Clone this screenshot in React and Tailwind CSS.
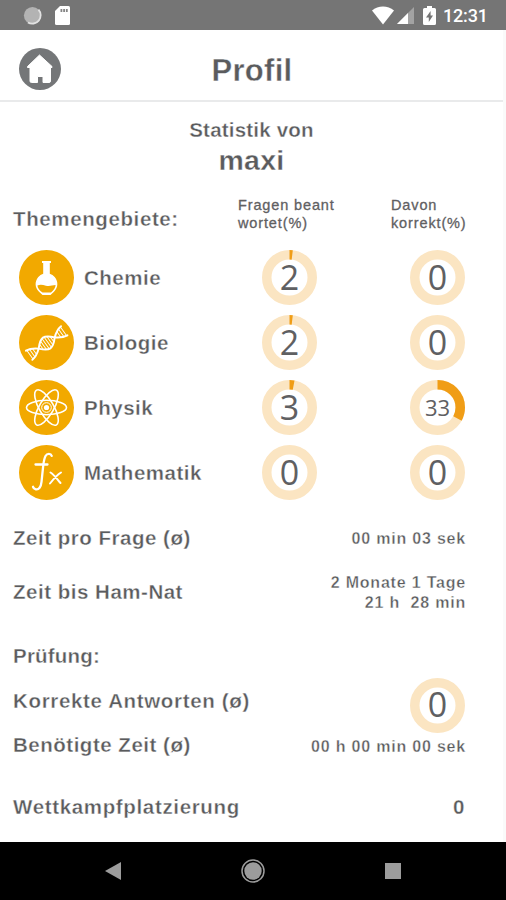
import React from 'react';

const StatusBar = () => (
  <div className="flex h-[30px] items-center justify-between bg-[#757575] pl-[23px] pr-[19px] [-webkit-text-stroke:0]">
    <div className="flex items-center gap-[13px]">
      <svg width="19" height="19" viewBox="0 0 19 19">
        <circle cx="9.5" cy="9.5" r="8.6" fill="#b3b3b3" />
        <path d="M15.5 3.6a8.4 8.4 0 0 1-10.6 12.8" fill="none" stroke="#e2e2e2" strokeWidth="1.8" />
      </svg>
      <svg width="15" height="19" viewBox="0 0 15 19">
        <path d="M5 0h8.5A1.5 1.5 0 0 1 15 1.5v16a1.5 1.5 0 0 1-1.5 1.5h-12A1.5 1.5 0 0 1 0 17.5V5z" fill="#fff" />
        <path d="M5.5 3h1.8v3H5.5zM8.2 3H10v3H8.2zM10.9 3h1.8v3h-1.8z" fill="#858585" />
      </svg>
    </div>
    <div className="flex items-center">
      <svg width="22" height="19" viewBox="0 0 22 19">
        <path d="M0 4.5C6.2-.9 15.8-.9 22 4.5L11 18.5z" fill="#fff" />
      </svg>
      <svg className="ml-[3px]" width="17" height="17" viewBox="0 0 17 17">
        <path d="M17 0v17H0z" fill="#a3a3a3" />
        <path d="M11 6v11H0z" fill="#fff" />
      </svg>
      <svg className="ml-[9px]" width="13" height="19" viewBox="0 0 13 19">
        <path d="M4 0h5v2h2.5A1.5 1.5 0 0 1 13 3.5v14a1.5 1.5 0 0 1-1.5 1.5h-10A1.5 1.5 0 0 1 0 17.5v-14A1.5 1.5 0 0 1 1.5 2H4z" fill="#fff" />
        <path d="M7.6 5L3 11.4h2.8V16L10 9.6H7.6z" fill="#757575" />
      </svg>
      <span className="ml-[7px] mt-[2px] w-[44px] whitespace-nowrap font-[Roboto] text-[18px] font-medium leading-none tracking-[-0.01em] text-white">
        12:31
      </span>
    </div>
  </div>
);

const Header = () => (
  <header className="grid h-[72px] grid-cols-[60px_1fr_60px] items-center border-b-2 border-[#e9eaeb] pl-[19px] pr-[18px] pt-[8px]">
    <svg width="42" height="42" viewBox="0 0 42 42">
      <circle cx="21" cy="21" r="21" fill="#747678" />
      <path
        d="M20.5 7L33 18.5v1h-1.5V33a1.5 1.5 0 0 1-1.5 1.5h-6v-6h-5.5v6h-6A1.5 1.5 0 0 1 11 33V19.5H8.500v-1z"
        fill="#fff"
        stroke="#fff"
        strokeLinejoin="round"
      />
    </svg>
    <h1 className="pt-[2px] text-center text-[31px] leading-none tracking-[0.01em]">Profil</h1>
  </header>
);

const FlaskIcon = () => (
  <svg width="55" height="55" viewBox="0 0 55 55">
    <circle cx="27.5" cy="27.5" r="27.5" fill="#f2a900" />
    <path
      d="M23 11h9v2h-1.2v10.8a12 12 0 0 1 4.9 3.3c3.8 4.6 3.5 10.7-.7 14.6L31.5 45h-8l-3.5-3.3c-4.2-3.9-4.5-10-.7-14.6a12 12 0 0 1 4.9-3.3V13H23z"
      fill="#fff"
    />
    <path d="M18.4 35.6c3-1.5 5.5-.6 8.5.1 3.3.7 6.2-.1 9.7-.6-.1 2.9-1.900 5.200-4.600 7.400h-8.500c-3-1.800-4.800-4-5.100-6.900z" fill="#f2a900" />
  </svg>
);

const DnaIcon = () => (
  <svg width="55" height="55" viewBox="0 0 55 55">
    <circle cx="27.5" cy="27.5" r="27.5" fill="#f2a900" />
    <g transform="translate(27.700 28) rotate(-35) scale(0.930)" fill="none" stroke="#fff" strokeLinecap="round">
      <path
        d="M-23-6C-17-5.500-14-3-10.500 0C-6 5-3 7 0 7S6 5 10.500 0C14-3 17-5.500 23-6M-23 6C-17 5.500-14 3-10.500 0C-6-5-3-7 0-7S6-5 10.500 0C14 3 17 5.500 23 6"
        strokeWidth="2.100"
      />
      <path
        d="M-22-5v10M-19-4.500v9M-16-3v6M-7-3v6M-4.200-5v10M-1.400-6v12M1.400-6v12M4.200-5v10M7-3v6M16-3v6M19-4.500v9M22-5v10"
        strokeWidth="1"
      />
    </g>
  </svg>
);

const AtomIcon = () => (
  <svg width="55" height="55" viewBox="0 0 55 55">
    <circle cx="27.5" cy="27.5" r="27.5" fill="#f2a900" />
    <g fill="none" stroke="#fff" strokeWidth="1.6">
      <ellipse cx="27.5" cy="27.5" rx="20" ry="7.200" />
      <ellipse cx="27.5" cy="27.5" rx="20" ry="7.200" transform="rotate(60 27.5 27.5)" />
      <ellipse cx="27.5" cy="27.5" rx="20" ry="7.200" transform="rotate(120 27.5 27.5)" />
      <circle cx="27.5" cy="27.5" r="4.8" strokeWidth="1" />
    </g>
    <circle cx="27.5" cy="27.5" r="2.6" fill="#fff" />
  </svg>
);

const FunctionIcon = () => (
  <svg width="55" height="55" viewBox="0 0 55 55">
    <circle cx="27.5" cy="27.5" r="27.5" fill="#f2a900" />
    <g fill="none" stroke="#fff" strokeWidth="2.3" strokeLinecap="round">
      <path d="M32.7 10.800c-.8-2.400-4.600-2.600-6.200.2-1.300 2.300-1.800 5.800-2.300 9.800l-1.700 16c-.5 5.200-2.700 8.200-5.700 7.500-1.400-.3-2.400-1.200-2.800-2.500" />
      <path d="M16.5 19.5h12" />
      <path d="M31.5 27.5c3.5 2 6.5 6.5 10 10.5M42 27.500C38 30 34.500 34 31 38.500" strokeWidth="2" />
    </g>
  </svg>
);

const Ring = ({ value }) => (
  <div className="grid h-[55px] w-[55px] shrink-0 place-items-center">
    <svg className="col-start-1 row-start-1" width="55" height="55" viewBox="0 0 55 55">
      <circle cx="27.5" cy="27.5" r="22.75" fill="none" stroke="#fbe5c2" strokeWidth="9.5" />
      {value > 0 && (
        <circle
          cx="27.5"
          cy="27.5"
          r="22.75"
          fill="none"
          stroke="#f09d16"
          strokeWidth="9.5"
          pathLength="100"
          strokeDasharray={`${value} 100`}
          transform="rotate(-90 27.5 27.5)"
        />
      )}
    </svg>
    <span
      className={`col-start-1 row-start-1 font-['Open_Sans'] font-normal leading-none tracking-normal text-[#5f6062] [-webkit-text-stroke:0] ${
        value > 9 ? 'pb-[2px] text-[22px]' : 'pb-[2px] text-[34px]'
      }`}
    >
      {value}
    </span>
  </div>
);

const topics = [
  { name: 'Chemie', icon: FlaskIcon, answered: 2, correct: 0 },
  { name: 'Biologie', icon: DnaIcon, answered: 2, correct: 0 },
  { name: 'Physik', icon: AtomIcon, answered: 3, correct: 33 },
  { name: 'Mathematik', icon: FunctionIcon, answered: 0, correct: 0 },
];

const TopicTable = () => (
  <section>
    <div className="grid h-[50px] grid-cols-[225px_153px_1fr] items-center">
      <h3 className="pb-[2px] tracking-[0.03em]">Themengebiete:</h3>
      <p className="pb-[11px] text-[14.5px] font-normal leading-[17.5px] tracking-[0.06em] text-[#5f6062] [-webkit-text-stroke:0.3px_#5f6062]">
        Fragen beant
        <br />
        wortet(%)
      </p>
      <p className="pb-[11px] text-[14.5px] font-normal leading-[17.5px] tracking-[0.06em] text-[#5f6062] [-webkit-text-stroke:0.3px_#5f6062]">
        Davon
        <br />
        korrekt(%)
      </p>
    </div>
    {topics.map(({ name, icon: Icon, answered, correct }) => (
      <div key={name} className="grid h-[65px] grid-cols-[65px_178px_148px_55px] items-center pl-[6px]">
        <Icon />
        <span className="pt-[2px]">{name}</span>
        <Ring value={answered} />
        <Ring value={correct} />
      </div>
    ))}
  </section>
);

const StatRow = ({ label, className, children }) => (
  <div className={`flex items-center justify-between ${className}`}>
    <span>{label}</span>
    <span className="-mr-px whitespace-pre pt-[2px] text-right text-[16px] leading-[20px] tracking-[0.05em]">{children}</span>
  </div>
);

const NavBar = () => (
  <nav className="flex h-[58px] items-center justify-between bg-black px-[105px]">
    <svg width="16" height="18" viewBox="0 0 16 18">
      <path d="M16 0v18L0 9z" fill="#9c9c9c" />
    </svg>
    <svg width="24" height="24" viewBox="0 0 24 24">
      <circle cx="12" cy="12" r="11" fill="none" stroke="#9c9c9c" strokeWidth="1.5" />
      <circle cx="12" cy="12" r="8.7" fill="#9c9c9c" />
    </svg>
    <svg width="16" height="16" viewBox="0 0 16 16">
      <path d="M0 0h16v16H0z" fill="#9c9c9c" />
    </svg>
  </nav>
);

// the thin white stroke trims the bold face down to a semi-bold
const App = () => {
  return (
    <div className="flex h-[900px] w-[506px] flex-col bg-[#fafafa] font-['Liberation_Sans',sans-serif] text-[20.5px] font-bold leading-none tracking-[0.025em] text-[#5a5b5d] [-webkit-text-stroke:0.35px_#fff]">
      <StatusBar />
      <div className="mr-[3px] bg-white">
        <Header />
      </div>
      <main className="mr-[3px] flex-1 bg-white pl-[13px] pr-[38px]">
        <div className="flex h-[93px] flex-col items-center pl-[25px] pt-[18px]">
          <h2 className="tracking-[0.01em]">Statistik von</h2>
          <p className="mt-[5px] text-[28.5px] tracking-[0.01em]">maxi</p>
        </div>
        <TopicTable />
        <StatRow label="Zeit pro Frage (ø)" className="mt-[13px] h-[40px]">
          00 min 03 sek
        </StatRow>
        <StatRow label="Zeit bis Ham-Nat" className="mt-[14px] h-[40px]">
          2 Monate 1 Tage{'\n'}21 h  28 min
        </StatRow>
        <h3 className="mt-[34px] tracking-[0.01em]">Prüfung:</h3>
        <div className="mt-[11px] flex h-[55px] justify-between">
          <span className="mt-[13px] tracking-[0.032em]">Korrekte Antworten (ø)</span>
          <Ring value={0} />
        </div>
        <StatRow label="Benötigte Zeit (ø)" className="mt-[2px] h-[22px]">
          00 h 00 min 00 sek
        </StatRow>
        <div className="mt-[40px] flex items-center justify-between">
          <span className="tracking-[0.032em]">Wettkampfplatzierung</span>
          <span>0</span>
        </div>
      </main>
      <NavBar />
    </div>
  );
};

export default App;
